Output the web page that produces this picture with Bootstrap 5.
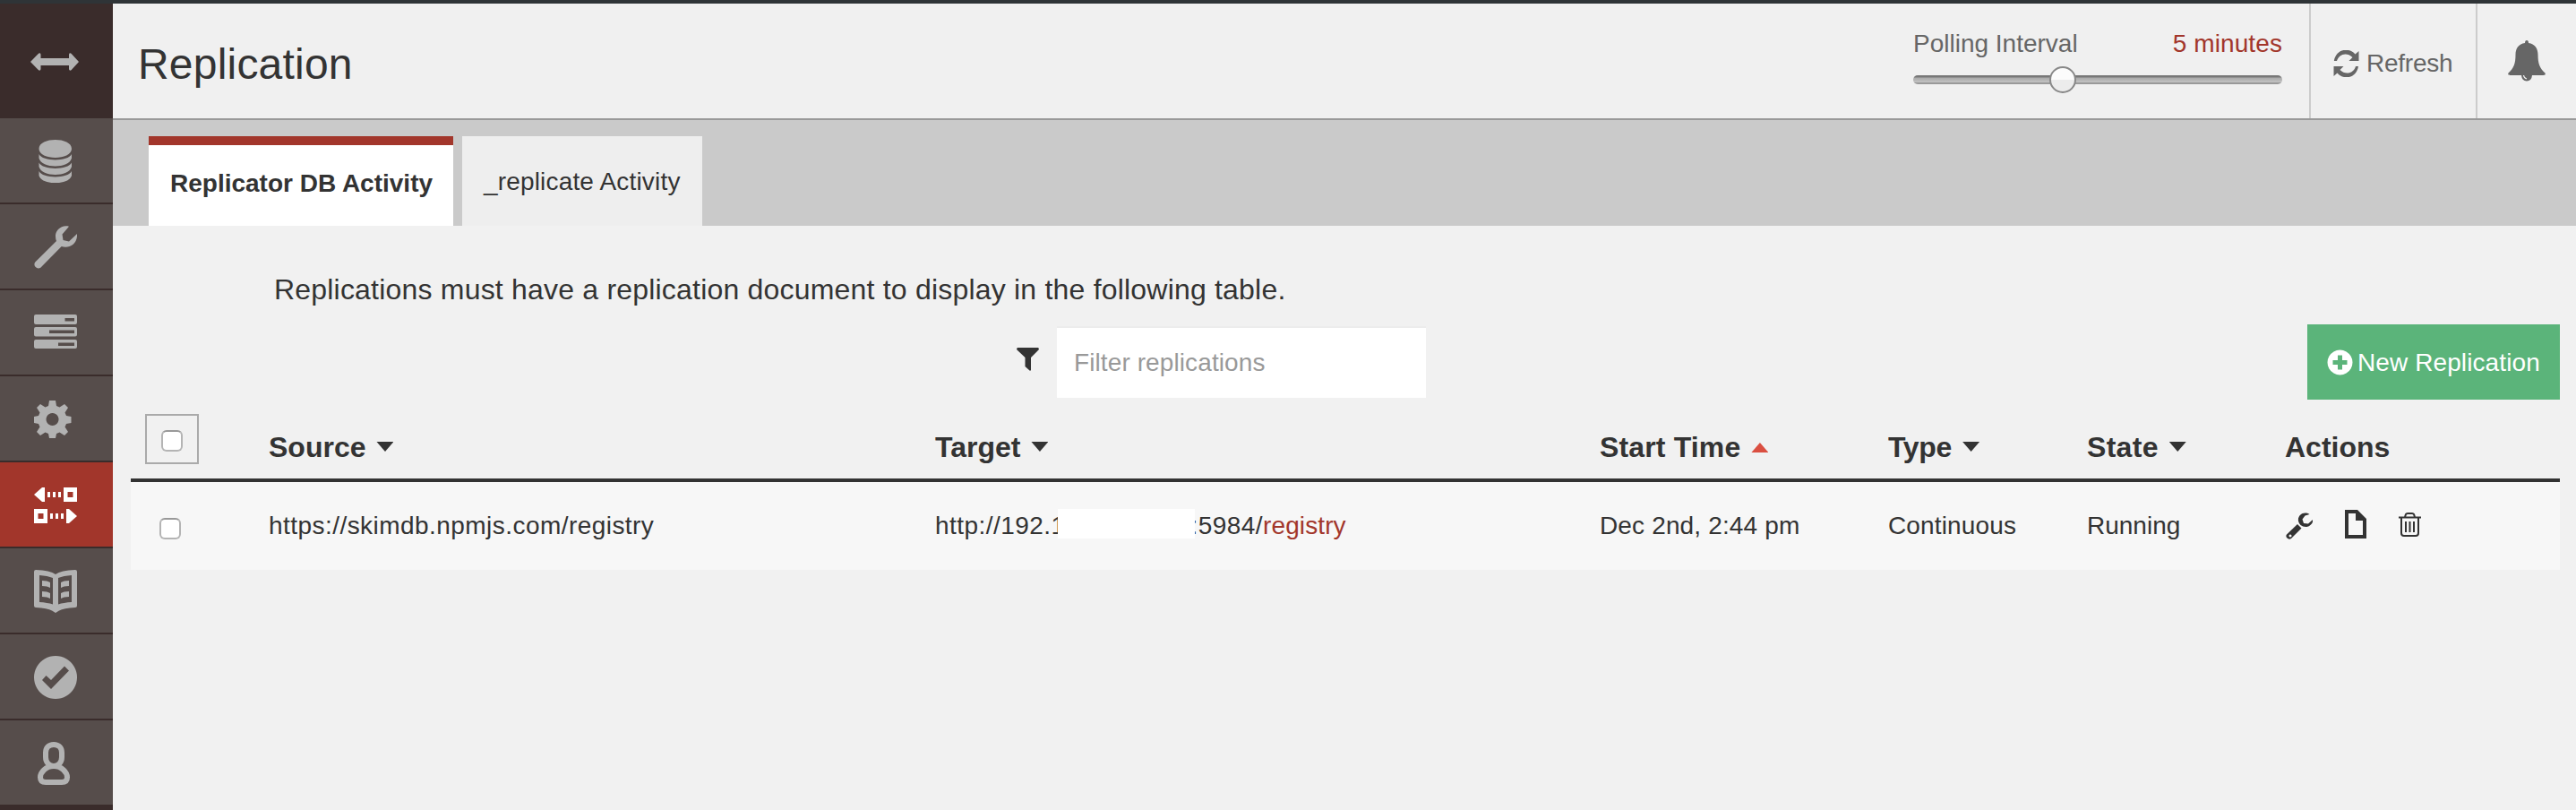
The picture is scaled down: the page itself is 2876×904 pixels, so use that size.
<!DOCTYPE html>
<html lang="en">
<head>
<meta charset="utf-8">
<meta name="viewport" content="width=device-width, initial-scale=1">
<title>Replication</title>
<link rel="stylesheet" href="https://cdn.jsdelivr.net/npm/bootstrap@5.3.0/dist/css/bootstrap.min.css">
<style>
body{font-family:"Liberation Sans",Arial,sans-serif;font-size:28px;line-height:40px;color:#333;background:#f1f1f1;height:904px;overflow:hidden;border-top:4px solid #2f3437}
.side{width:126px;background:#3a2c2b;height:900px;color:#b2b2b2}
.side .nav-link{height:96px;padding:24px 0 0 38px;background:#564d4b;border-bottom:2px solid #3a2c2b;color:#b2b2b2}
.side .nav-link.active{background:#a2362b;color:#fff}
.side svg,.tool svg,.acts svg{display:block;fill:currentColor}
.burger{height:128px;padding:55px 0 0 34px}
.topbar{height:130px;border-bottom:2px solid #999;background:#f0f0f0;color:#666}
.topbar h1{font-size:48px;line-height:56px;color:#333;letter-spacing:.2px;padding-left:28px;padding-top:7px}
.poll{width:442px;padding:25px 30px 0 0;line-height:40px}
.poll b{font-weight:400;color:#a2362b;letter-spacing:.1px}
.track{height:10px;border-radius:5px;margin-top:15px;background:linear-gradient(#777 0,#777 2px,#a9a9a9 3px,#c4c4c4 8px,#999 8px)}
.knob{width:30px;height:30px;left:152px;top:-10px;border-radius:50%;border:2px solid #888;background:linear-gradient(#fcfcfc 50%,#ececec 50%)}
.tool{border-left:2px solid #ccc;height:128px}
.refresh{width:186px;padding:5px 0 0 25px;gap:8px;letter-spacing:-.25px}
.bell{width:112px;padding:41px 0 0 34px}
.tabs{height:118px;background:#cacaca;padding:18px 0 0 40px;gap:10px}
.tabs .nav-link{height:100px;padding:31px 24px 0;line-height:40px;color:#333;background:#eee;border-radius:0;white-space:nowrap;width:268px;letter-spacing:.17px}
.tabs .nav-link.active{width:340px;padding-top:23px;border-top:10px solid #a2362b;background:#fff;color:#333;font-weight:700;letter-spacing:0}
.intro{font-size:32px;line-height:40px;margin:51px 0 0 180px;letter-spacing:.2px}
.bar{height:84px;margin-top:19px;padding-right:18px}
.funnel{margin:26px 0 0 1009px}
.bar .form-control{width:412px;height:78px;border:0;border-radius:0;font-size:28px;padding:0 18px 0 19px;margin-left:20px;margin-top:4px;background:#fff;box-shadow:0 -2px 0 #ececec;letter-spacing:.1px}
.bar .form-control::placeholder{color:#999}
.bar .btn{width:282px;height:84px;border-radius:0;background:#5bb47a;color:#fff;font-size:28px;padding:0 0 0 21px;gap:5px;letter-spacing:.1px}
.bar .btn span{padding-top:2px}
.grid{width:2712px;margin:10px 0 0 20px;table-layout:fixed;color:#333;border-collapse:separate;border-spacing:0}
.grid th,.grid td{padding:0;white-space:nowrap;border:0;vertical-align:top}
.grid th{height:82px;font-size:32px;line-height:40px;padding-top:23px;border-bottom:4px solid #333}
.grid td{height:98px;padding-top:29px;background:#f7f7f7}
.grid th:first-child{padding:6px 0 0 16px}
.grid td:first-child{padding:40px 0 0 32px}
.url{letter-spacing:.45px}
.db{color:#a2362b;letter-spacing:.1px}
.pick{width:60px;height:56px;border:2px solid #aaa;padding-top:4px}
.cb{display:block;margin:0;width:24px;height:24px;border:2px solid #b4b4b4;border-top-color:#999;border-radius:6px;background:#fff;appearance:none}
.caret{display:inline-block;width:19px;height:11px;margin-left:12px;vertical-align:6px;background:#333;clip-path:polygon(0 0,100% 0,50% 100%)}
.caret.up{background:#da4f41;clip-path:polygon(50% 0,100% 100%,0 100%);vertical-align:5px}
.mask{display:inline-block;width:153px;height:33px;background:#fff;vertical-align:-5px;margin:0 -4px 0 -9px;position:relative}
.acts{padding:2px 0 0 1px}
.acts svg+svg{margin-left:36px}
</style>
</head>
<body>
<div class="d-flex">
<nav class="side flex-shrink-0">
 <div class="burger"><svg width="54" height="20" viewBox="0 0 54 20"><path d="M0 10 9 0.700q2-1 2.500 1V6H43V1.700q.5-2 2.500-1L54 10 45.500 19.300q-2 1-2.500-1V14H11.500v4.300q-.5 2-2.500 1z"/></svg></div>
 <div class="nav flex-column flex-nowrap">
 <a class="nav-link"><svg width="48" height="48"><path d="M5.500 10C5.500-3.300 42-3.300 42 10S5.500 23.300 5.500 10zM5.500 16c4 8.500 32.500 8.500 36.500 0v4.500c-3 12-33.500 12-36.500 0zM5.500 25.500c4 8.500 32.500 8.500 36.500 0V30c-3 12-33.500 12-36.500 0zM5.500 35c4 8.500 32.500 8.500 36.500 0v5c-3 11-33.500 11-36.500 0z"/></svg></a>
 <a class="nav-link"><svg width="48" height="48"><path d="M39 .8C31-1.500 23.500 5 24 12q.1 3 1 5L1.300 40.500c-3 4 2 9 6 6.200L30.700 23C39 26 49 20 48 9l-9 8.500-6.500-1.500-1-6.500z"/></svg></a>
 <a class="nav-link"><svg width="48" height="48"><path fill-rule="evenodd" d="M2 3H46q2 0 2 2v7q0 2-2 2H2q-2 0-2-2V5q0-2 2-2zM34.500 7v3.500H45V7zM2 17H46q2 0 2 2v6.500q0 2-2 2H2q-2 0-2-2V19q0-2 2-2zM17 20.500V24H45v-3.500zM2 31H46q2 0 2 2v6q0 2-2 2H2q-2 0-2-2v-6q0-2 2-2zM27 34.500V38H45v-3.500z"/></svg></a>
 <a class="nav-link"><svg width="48" height="48"><path transform="translate(0 3)" fill-rule="evenodd" d="M17 0h7l1 6 3.500 1.500L34 4l4 4-3.500 5.500L36 17l5.500 1v7L36 26l-1.500 3.500L38 35l-4 4-5.500-3.500L25 37l-1 5h-7l-1-5-3.500-1.500L7 39l-4-4 3.500-5.500L5 26l-5-1v-7l5-1 1.500-3.500L3 8l4-4 5.500 3.500L16 6zM20.500 14a7 7 0 1 0 .01 0z"/></svg></a>
 <a class="nav-link active"><svg width="48" height="48"><path fill-rule="evenodd" d="M0 12 9 4h3v16H9zM15 9h3v6h-3zM21 9h3v6h-3zM27 9h3v6h-3zM33 4h15v16H33zM37.500 9v6h6V9zM0 28h15v16H0zM4.500 33v6h6v-6zM18 33h3v6h-3zM24 33h3v6h-3zM30 33h3v6h-3zM36 28h3l9 8-9 8h-3z"/></svg></a>
 <a class="nav-link"><svg width="48" height="48"><path fill-rule="evenodd" d="M2 0q16 .5 22 5Q30 .5 46 0q2 0 2 2V40q0 2-2 2-13 .5-18 3.500L24 48l-4-2.500Q15 42.500 2 42q-2 0-2-2V2Q0 0 2 0zM6 6V36q9 .5 15 2.500V9Q15 6.500 6 6zM42 6q-9 .5-15 3V38.500Q33 36.500 42 36zM9 12q6 0 9 2v6q-3-2-9-2zM9 24q6 0 9 2v6q-3-2-9-2zM39 12q-6 0-9 2v6q3-2 9-2zM39 24q-6 0-9 2v6q3-2 9-2z"/></svg></a>
 <a class="nav-link"><svg width="48" height="48"><path fill-rule="evenodd" d="M24 0a24 24 0 1 0 .01 0zM34 11.500 39 16.500 19 37 9 27l4.500-5 5.500 5z"/></svg></a>
 <a class="nav-link"><svg width="48" height="48"><path fill="none" stroke="currentColor" stroke-width="6" d="M22 3c-6 0-9 4-9 9v5c0 6 4 10 9 10s9-4 9-10v-5c0-5-3-9-9-9zM22 27C13 27 7 34 7 39.500c0 4 2.500 5.500 6 5.500H31c3.500 0 6-1.500 6-5.500C37 34 31 27 22 27z"/></svg></a>
 </div>
</nav>
<main class="flex-grow-1">
 <header class="topbar d-flex">
  <h1 class="m-0 flex-grow-1 d-flex align-items-center">Replication</h1>
  <div class="poll"><div class="d-flex justify-content-between"><span>Polling Interval</span><b>5 minutes</b></div><div class="track position-relative"><div class="knob position-absolute"></div></div></div>
  <div class="tool refresh d-flex align-items-center"><svg width="29" height="30" viewBox="0 0 29 30"><path d="M.8 12C3-1 17-4 24.500 4.500L28.500 1V12H17.500l4-4C15 1.500 6 4.500 4 12zM28 18C26 31 12 34 4.500 25.500L.5 29V18H11.500L7.500 22C14 28.500 23 25.500 25 18z"/></svg><span>Refresh</span></div>
  <div class="tool bell"><svg width="42" height="46" viewBox="0 0 42 46"><path d="M21 0q2 0 2 3c7 1 10.500 6 10.500 13 0 10 2 15 8 20.500.8 2-.5 2.500-2 2.500H27q-.5 6-6 6.500-5.500-.5-6-6.500H2.500C1 39-.3 38.500.5 36.500c6-5.500 8-10.500 8-20.500C8.500 9 12 4 19 3q0-3 2-3z"/><path d="M17.500 39q.5 3.500 3.500 4" fill="none" stroke="#f0f0f0" stroke-width="1.200"/></svg></div>
 </header>
 <nav class="tabs nav"><a class="nav-link active">Replicator DB Activity</a><a class="nav-link">_replicate Activity</a></nav>
 <p class="intro">Replications must have a replication document to display in the following table.</p>
 <div class="bar d-flex">
  <svg class="funnel" width="25" height="26" fill="#333"><path d="M1 0H24q1.500 1 .5 2.500L16 11V25q-.5 1-1.500.5L9.500 21V11L.5 2.500Q-.5 1 1 0z"/></svg>
  <input class="form-control" placeholder="Filter replications">
  <button class="btn d-flex align-items-center ms-auto"><svg width="29" height="29" fill="#fff"><path fill-rule="evenodd" d="M14.500.5a14 14 0 1 0 .01 0zM12 6.500h5V12h5.500v5H17v5.500h-5V17H6.500v-5H12z"/></svg><span>New Replication</span></button>
 </div>
 <table class="grid">
  <colgroup><col style="width:154px"><col style="width:744px"><col style="width:742px"><col style="width:322px"><col style="width:222px"><col style="width:221px"><col></colgroup>
  <thead><tr><th><div class="pick d-flex align-items-center justify-content-center"><input type="checkbox" class="cb"></div></th><th>Source<i class="caret"></i></th><th>Target<i class="caret"></i></th><th style="letter-spacing:.15px">Start Time<i class="caret up"></i></th><th style="letter-spacing:-.3px">Type<i class="caret"></i></th><th style="letter-spacing:.3px">State<i class="caret"></i></th><th>Actions</th></tr></thead>
  <tbody><tr><td><input type="checkbox" class="cb"></td><td class="url">https://skimdb.npmjs.com/registry</td><td class="url">http://192.1<span class="mask"></span>:5984/<span class="db">registry</span></td><td style="letter-spacing:.15px">Dec 2nd, 2:44 pm</td><td style="letter-spacing:.15px">Continuous</td><td>Running</td>
  <td><div class="acts d-flex"><svg width="30" height="34"><path fill-rule="evenodd" d="M26.500 5C20 1 13 6 14 12.500q.5 2.500 2.500 4.500 3 2.500 7 2C28 18 31 14 30 11l-5 4.500-5-.5-1.500-4.500L21.500 6.500zM13 16l4.500 4.500L6 32q-2.500 1.500-4.500-.5T1 27.500zM5 27.500a1.500 1.500 0 1 0 .01 0z"/></svg><svg width="24" height="34"><path fill-rule="evenodd" d="M0 0H14L24 10V32H0zM4 4V28H20V12H12V4z"/></svg><svg width="25" height="34"><path fill="none" stroke="currentColor" stroke-width="2" d="M0 8.500H25M7 8 8 5q.5-1 2-1h5q1.500 0 2 1l1 3M3 9V26q0 3 3 3H19q3 0 3-3V9M8 13V25M12.500 13V25M17 13V25"/></svg></div></td></tr></tbody>
 </table>
</main>
</div>
<script src="https://cdn.jsdelivr.net/npm/bootstrap@5.3.0/dist/js/bootstrap.bundle.min.js"></script>
</body>
</html>
